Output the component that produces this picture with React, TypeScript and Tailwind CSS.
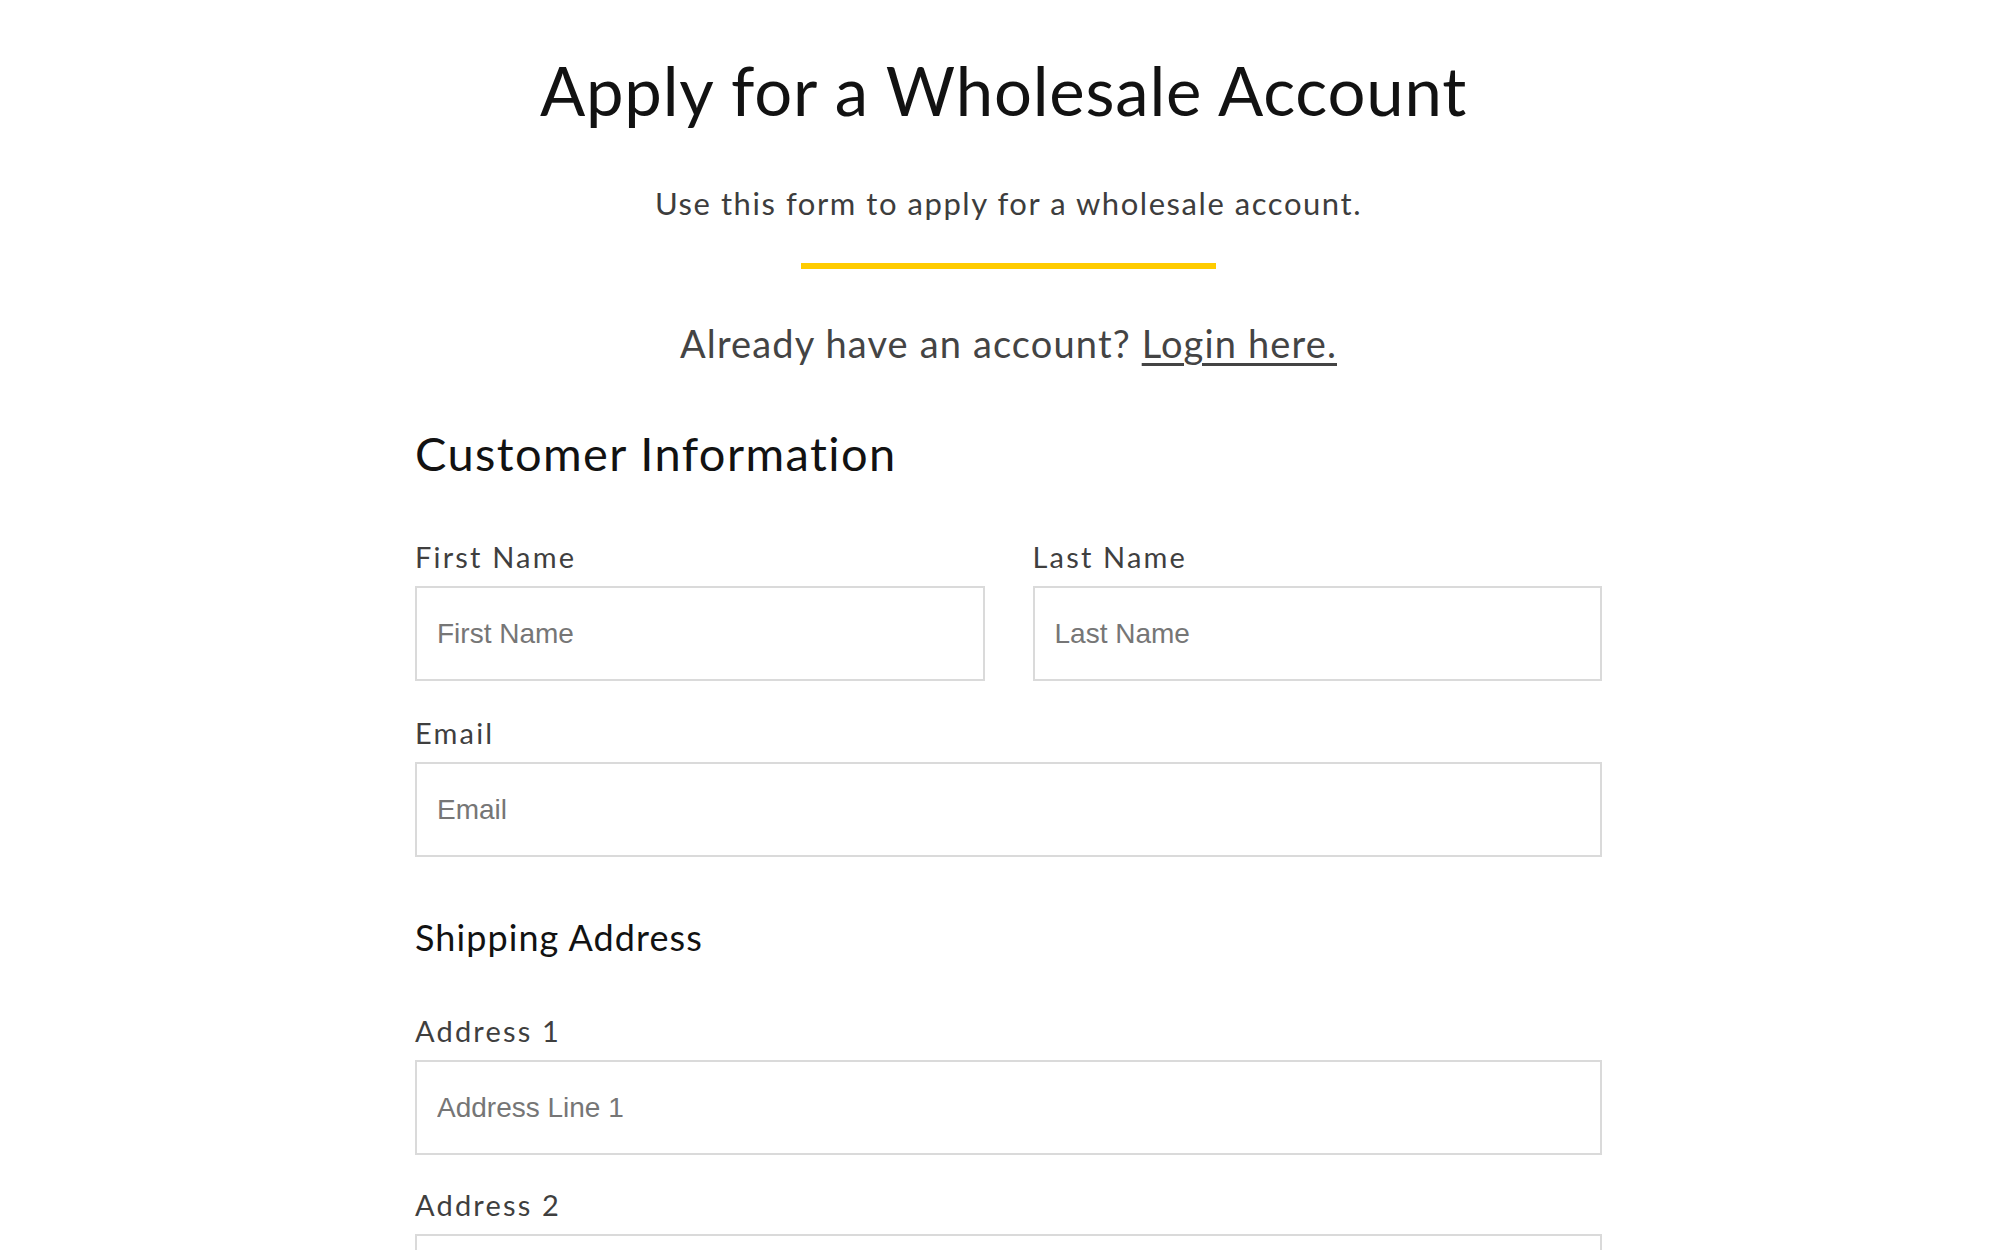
import React from 'react';

interface FieldProps {
  label: string;
  placeholder: string;
  className?: string;
}

function Field({ label, placeholder, className }: FieldProps) {
  return (
    <div className={className}>
      <label className="block text-[29px] leading-[34px] tracking-[0.075em] text-[#3f3f3f]">{label}</label>
      <input
        type="text"
        placeholder={placeholder}
        className="mt-3 block h-[95px] w-full border-2 border-[#dadada] bg-white px-[20px] font-['Liberation_Sans',Arial,sans-serif] text-[28px] text-[#121212] outline-none placeholder:text-[#767676]"
      />
    </div>
  );
}

export default function App() {
  return (
    <div className="min-h-screen bg-white font-['Lato','Open_Sans',sans-serif] text-[#121212]">
      <div className="ml-[415px] w-[1187px] pt-[50px] pb-16">
        <h1 className="pr-[10px] text-center text-[67px] leading-[80px] tracking-[0.012em] text-[#121212]">
          Apply for a Wholesale Account
        </h1>
        <p className="mt-[55px] text-center text-[31px] leading-[36px] tracking-[0.05em] text-[#3d3d3d]">
          Use this form to apply for a wholesale account.
        </p>
        <div className="mx-auto mt-[42px] h-[6px] w-[415px] bg-[#ffcc00]" />
        <p className="mt-[52px] text-center text-[38px] leading-[45px] tracking-[0.03em] text-[#444444]">
          Already have an account?{' '}
          <a href="#" className="underline decoration-[3px] underline-offset-[5px]">
            Login here.
          </a>
        </p>

        <form className="mt-[59px]" onSubmit={(e) => e.preventDefault()}>
          <h2 className="text-[47px] leading-[56px] tracking-[0.03em] text-[#121212]">Customer Information</h2>
          <div className="mt-[59px] grid grid-cols-2 gap-x-12">
            <Field label="First Name" placeholder="First Name" />
            <Field label="Last Name" placeholder="Last Name" />
          </div>
          <Field className="mt-[35px]" label="Email" placeholder="Email" />

          <h3 className="mt-[59px] text-[36px] leading-[42px] tracking-[0.03em] text-[#121212]">Shipping Address</h3>
          <Field className="mt-[56px]" label="Address 1" placeholder="Address Line 1" />
          <Field className="mt-[33px]" label="Address 2" placeholder="Address Line 2" />
        </form>
      </div>
    </div>
  );
}
